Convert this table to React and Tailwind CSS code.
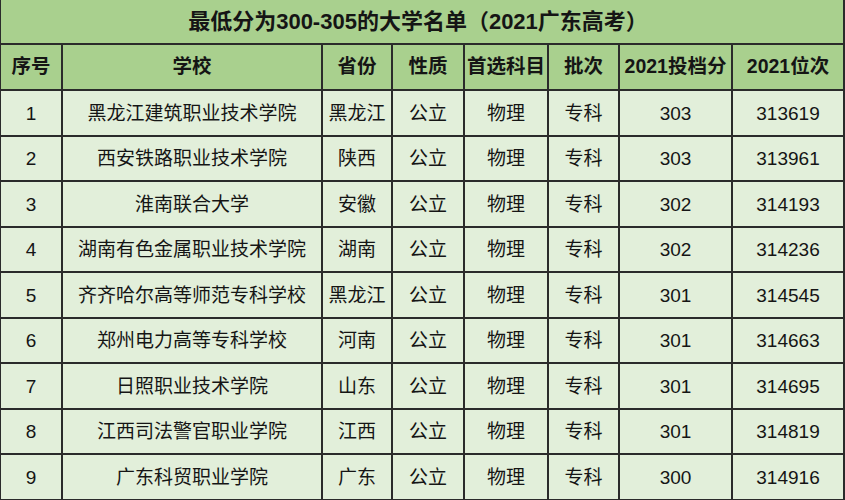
import React from "react";

const rows = [
  ["1", "黑龙江建筑职业技术学院", "黑龙江", "公立", "物理", "专科", "303", "313619"],
  ["2", "西安铁路职业技术学院", "陕西", "公立", "物理", "专科", "303", "313961"],
  ["3", "淮南联合大学", "安徽", "公立", "物理", "专科", "302", "314193"],
  ["4", "湖南有色金属职业技术学院", "湖南", "公立", "物理", "专科", "302", "314236"],
  ["5", "齐齐哈尔高等师范专科学校", "黑龙江", "公立", "物理", "专科", "301", "314545"],
  ["6", "郑州电力高等专科学校", "河南", "公立", "物理", "专科", "301", "314663"],
  ["7", "日照职业技术学院", "山东", "公立", "物理", "专科", "301", "314695"],
  ["8", "江西司法警官职业学院", "江西", "公立", "物理", "专科", "301", "314819"],
  ["9", "广东科贸职业学院", "广东", "公立", "物理", "专科", "300", "314916"],
];

const headers = ["序号", "学校", "省份", "性质", "首选科目", "批次", "2021投档分", "2021位次"];

export default function App() {
  return (
    <div
      className="w-[845px] h-[500px] overflow-hidden bg-[#2b2b2b] pl-[1px] text-[#151515]"
      style={{ fontFamily: '"Liberation Sans", "Noto Sans CJK SC", sans-serif' }}
    >
      <div className="grid grid-cols-[60px_258px_68px_70px_82px_69px_111px_110px] grid-rows-[43px_44px_repeat(9,43.5px)] gap-[2px]">
        <div className="col-span-8 flex items-center justify-center bg-[#a9d08e] pr-[8px] text-[22px] font-bold whitespace-nowrap">
          最低分为300-305的大学名单（2021广东高考）
        </div>
        {headers.map((h) => (
          <div key={h} className="flex items-center justify-center bg-[#a9d08e] text-[19.5px] font-bold whitespace-nowrap">
            {h}
          </div>
        ))}
        {rows.map((r) =>
          r.map((c, i) => (
            <div key={r[0] + "-" + i} className="flex items-center justify-center bg-[#e2efda] pt-[2px] text-[19px] whitespace-nowrap">
              {c}
            </div>
          ))
        )}
      </div>
    </div>
  );
}
